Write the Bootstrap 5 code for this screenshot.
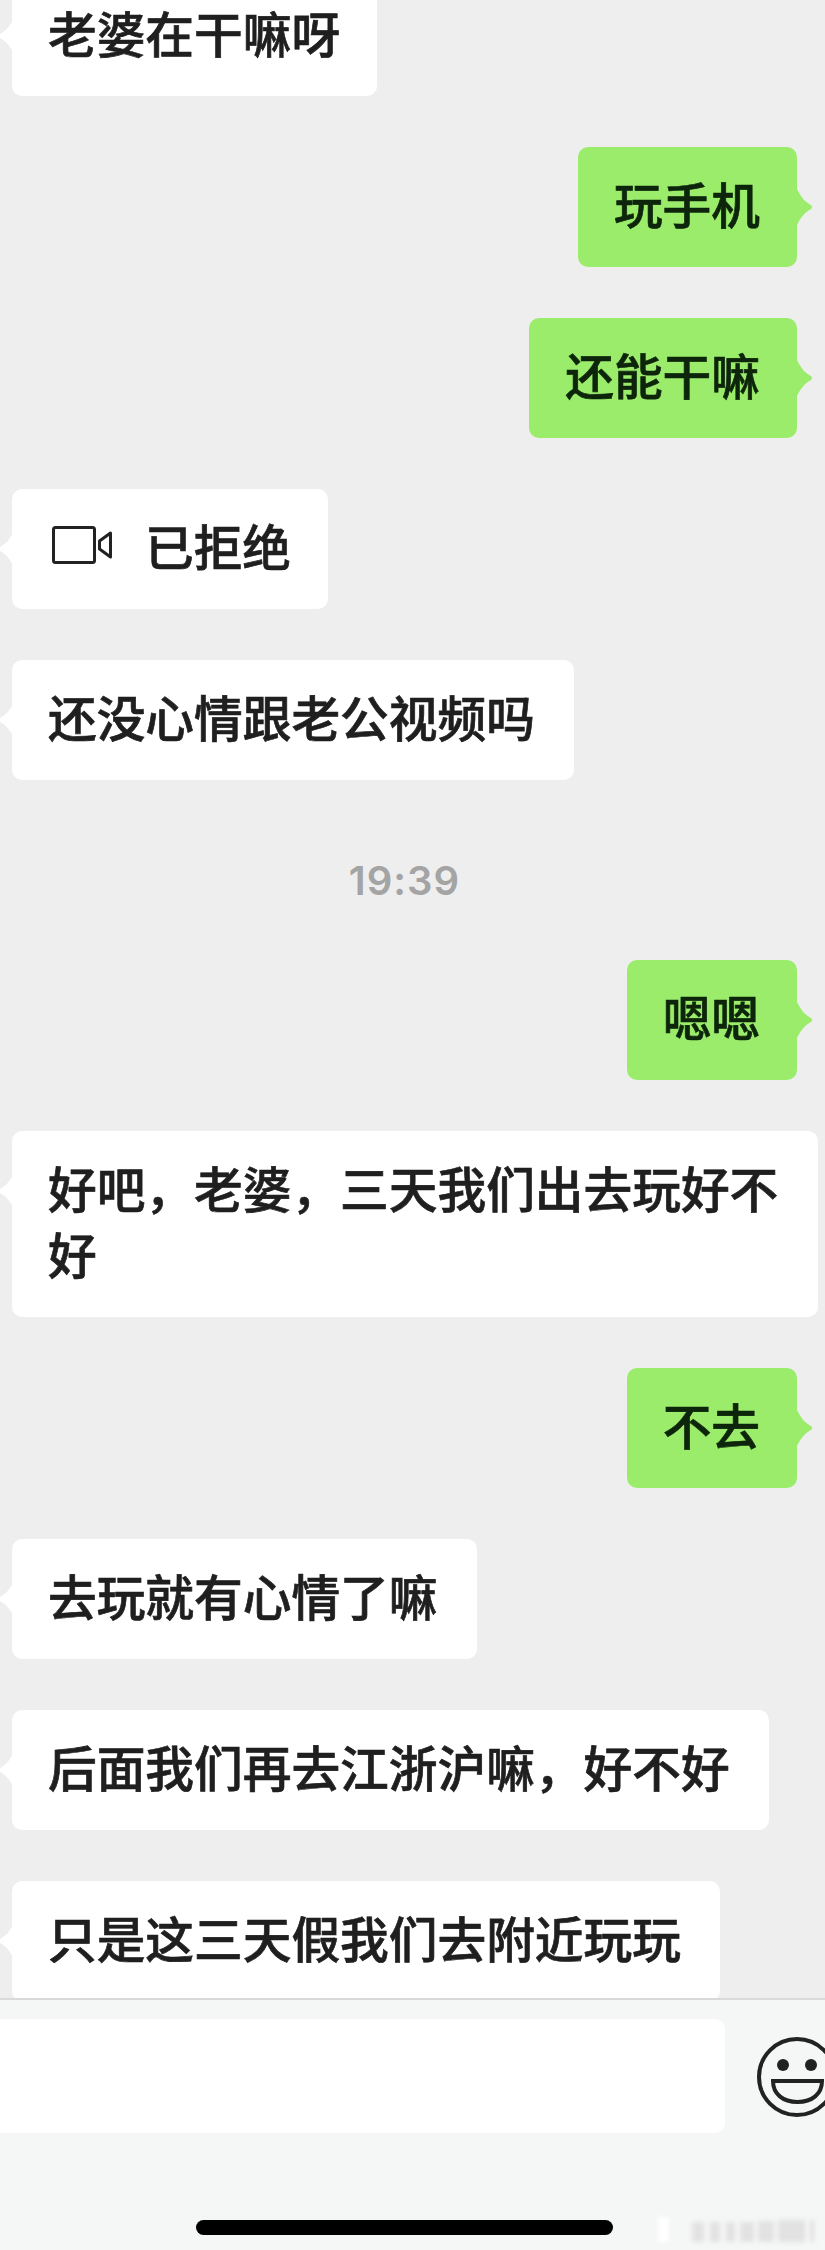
<!DOCTYPE html>
<html lang="zh-CN">
<head>
  <meta charset="UTF-8" />
  <meta name="viewport" content="width=device-width, initial-scale=1.0"/>
  <title>聊天记录</title>
  <link href="https://cdn.jsdelivr.net/npm/bootstrap@5.3.0/dist/css/bootstrap.min.css" rel="stylesheet">
  <style>
    body {
      background: #eeeeee;
      font-family: "Noto Sans CJK SC", "Liberation Sans", sans-serif;
      width: 825px;
      height: 2250px;
      overflow: hidden;
    }
    .chat-page { height: 2250px; }
    .chat-log {
      height: 1998px;
      overflow: hidden;
      padding: 0 28px 0 12px;
      gap: 51px;
    }
    .msg {
      position: relative;
      padding: 23px 39px 31px 36px;
      font-size: 48.7px;
      line-height: 66px;
      font-weight: 500;
      -webkit-text-stroke: 0.7px currentColor;
      color: #1f1f1f;
      border-radius: 10px;
      flex-shrink: 0;
    }
    .msg::after {
      content: "";
      position: absolute;
      top: 42px;
      width: 15px;
      height: 36px;
    }
    .msg-in { background: #fff; align-self: flex-start; }
    .msg-in::after {
      left: -13px;
      background: #fff;
      clip-path: path('M15 0 C11 8 7 13 1 16 Q-1 18 1 20 C7 23 11 28 15 36z');
    }
    .msg-out { background: #9cec6c; align-self: flex-end; color: #0d260b; padding-right: 37px; }
    .msg-out::after {
      right: -15px;
      background: #9cec6c;
      clip-path: path('M0 0 C4 8 8 13 14 16 Q16 18 14 20 C8 23 4 28 0 36z');
    }
    .first-msg { margin-top: -24px; padding-right: 37px; }
    .call-msg { padding-right: 37px; }
    .wide-msg { width: 806px; padding-right: 30px; }
    .time-row {
      height: 78px;
      flex-shrink: 0;
      padding-top: 25px;
      font-family: Inter, "Liberation Sans", sans-serif;
      font-size: 40px;
      letter-spacing: 1px;
      line-height: 50px;
      font-weight: 600;
      color: #a4a4a4;
      text-align: center;
    }
    .call-icon { width: 60px; height: 38px; margin-left: 4px; margin-right: 33px; flex-shrink: 0; }
    .input-bar {
      height: 252px;
      background: #f5f6f6;
      border-top: 2px solid #d9d9d9;
      padding-top: 19px;
      position: relative;
      overflow: hidden;
    }
    .input-box {
      width: 725px;
      height: 114px;
      flex-shrink: 0;
      background: #fff;
      border-radius: 0 10px 10px 0;
    }
    .smile-icon { width: 80px; height: 80px; margin-left: 32px; margin-top: 18px; flex-shrink: 0; }
    .home-bar {
      position: absolute;
      left: 196px;
      top: 220px;
      width: 417px;
      height: 15px;
      border-radius: 8px;
      background: #000;
    }
    .mark-blur {
      position: absolute;
      left: 656px;
      top: 217px;
      width: 162px;
      height: 26px;
      filter: blur(2px);
    }
  </style>
</head>
<body>
<div class="chat-page d-flex flex-column">
  <div class="chat-log d-flex flex-column">
    <div class="msg msg-in first-msg">老婆在干嘛呀</div>
    <div class="msg msg-out">玩手机</div>
    <div class="msg msg-out">还能干嘛</div>
    <div class="msg msg-in call-msg d-flex align-items-center">
      <svg class="call-icon" viewBox="0 0 60 38" fill="none" stroke="#222" stroke-width="3" stroke-linejoin="round">
        <rect x="1.5" y="1.5" width="41" height="35" rx="2"/>
        <path d="M58.500 7 47.500 15v8l11 8z"/>
      </svg>
      <span>已拒绝</span>
    </div>
    <div class="msg msg-in">还没心情跟老公视频吗</div>
    <div class="time-row">19:39</div>
    <div class="msg msg-out">嗯嗯</div>
    <div class="msg msg-in wide-msg">好吧，老婆，三天我们出去玩好不好</div>
    <div class="msg msg-out">不去</div>
    <div class="msg msg-in">去玩就有心情了嘛</div>
    <div class="msg msg-in">后面我们再去江浙沪嘛，好不好</div>
    <div class="msg msg-in">只是这三天假我们去附近玩玩</div>
  </div>
  <div class="input-bar d-flex align-items-start">
    <div class="input-box"></div>
    <svg class="smile-icon" viewBox="0 0 80 80" fill="none" stroke="#222">
      <circle cx="40" cy="40" r="38" stroke-width="4"/>
      <circle cx="26" cy="28" r="6" fill="#222" stroke="none"/>
      <circle cx="54" cy="28" r="6" fill="#222" stroke="none"/>
      <path d="M16 44h49c0 13-10 21-24.500 21S16 57 16 44z" stroke-width="4"/>
    </svg>
    <div class="home-bar"></div>
    <svg class="mark-blur" viewBox="0 0 162 26" fill="#e2e2e2">
      <rect x="2" y="0" width="11" height="25" fill="#fff"/>
      <rect x="36" y="5" width="12" height="20"/>
      <rect x="54" y="5" width="10" height="20"/>
      <rect x="70" y="5" width="9" height="20"/>
      <rect x="84" y="5" width="14" height="20"/>
      <rect x="102" y="4" width="16" height="21"/>
      <rect x="122" y="3" width="36" height="22"/>
      <rect x="150" y="3" width="3" height="22" fill="#fff"/>
    </svg>
  </div>
</div>
<script src="https://cdn.jsdelivr.net/npm/bootstrap@5.3.0/dist/js/bootstrap.bundle.min.js"></script>
</body>
</html>
